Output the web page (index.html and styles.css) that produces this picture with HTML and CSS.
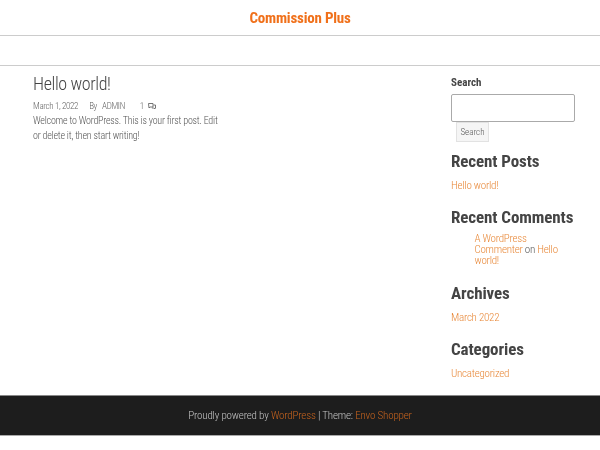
FILE: index.html
```html
<!DOCTYPE html>
<html lang="en">
<head>
<meta charset="utf-8">
<title>Commission Plus</title>
<link rel="stylesheet" href="styles.css">
</head>
<body>
<header class="site-header">
  <a class="site-title" href="#">Commission Plus</a>
</header>
<nav class="site-nav"></nav>
<div class="content">
  <main class="posts">
    <article class="post">
      <h2 class="post-title">Hello world!</h2>
      <div class="post-meta">
        <span class="meta-date">March 1, 2022</span>
        <span class="meta-by">By</span>
        <span class="meta-author">ADMIN</span>
        <span class="meta-comments">1
          <svg class="comment-icon" width="8" height="7" viewBox="0 0 8 7" aria-hidden="true">
            <path d="M.5.5h4.5v3.5h-3l-1 1z" fill="none" stroke="#666" stroke-width=".9"/>
            <path d="M5.5 2h2v3h-.6v1l-1-1h-2" fill="none" stroke="#666" stroke-width=".9"/>
          </svg>
        </span>
      </div>
      <p class="post-excerpt">Welcome to WordPress. This is your first post. Edit or delete it, then start writing!</p>
    </article>
  </main>
  <aside class="sidebar">
    <section class="widget-search">
      <label class="search-label">Search</label>
      <input class="search-input" type="text">
      <button class="search-button">Search</button>
    </section>
    <section class="widget">
      <h3 class="widget-title">Recent Posts</h3>
      <a class="link" href="#">Hello world!</a>
    </section>
    <section class="widget">
      <h3 class="widget-title">Recent Comments</h3>
      <div class="comment-item"><a class="link" href="#">A WordPress Commenter</a> on <a class="link" href="#">Hello world!</a></div>
    </section>
    <section class="widget">
      <h3 class="widget-title">Archives</h3>
      <a class="link" href="#">March 2022</a>
    </section>
    <section class="widget">
      <h3 class="widget-title">Categories</h3>
      <a class="link" href="#">Uncategorized</a>
    </section>
  </aside>
</div>
<footer class="site-footer">
  <span>Proudly powered by <a class="footer-link" href="#">WordPress</a> | Theme: <a class="footer-link" href="#">Envo Shopper</a></span>
</footer>
</body>
</html>
```
FILE: styles.css
```css
* { box-sizing: border-box; }
html, body { margin: 0; padding: 0; background: #fff; }
body {
  width: 600px;
  height: 450px;
  overflow: hidden;
  font-family: Roboto, "Liberation Sans", sans-serif;
  font-stretch: 75%;
  font-weight: 300;
  font-size: 12px;
  color: #666;
  filter: blur(0.4px);
}
a { text-decoration: none; }
.site-header {
  height: 36px;
  border-bottom: 1px solid #ccc;
  display: flex;
  justify-content: center;
  align-items: center;
}
.site-title {
  color: #f0701a;
  font-size: 15px;
  font-weight: 700;
  letter-spacing: -0.2px;
}
.site-nav { height: 30px; border-bottom: 1px solid #ccc; }
.content {
  height: 329px;
  display: flex;
  justify-content: space-between;
  padding: 0 25px 0 33px;
}
.posts { width: 190px; padding-top: 8px; }
.post-title {
  margin: 0;
  font-size: 18px;
  line-height: 20px;
  font-weight: 300;
  color: #444;
  letter-spacing: -0.4px;
}
.post-meta {
  display: flex;
  align-items: center;
  margin-top: 6px;
  height: 12px;
  font-size: 9px;
  letter-spacing: -0.35px;
  color: #666;
}
.meta-by { margin-left: 11px; }
.meta-author { margin-left: 5px; }
.meta-comments { margin-left: 15px; display: flex; align-items: center; gap: 4px; }
.post-excerpt {
  margin: 1px 0 0;
  font-size: 10px;
  line-height: 15px;
  letter-spacing: -0.22px;
  color: #555;
}
.sidebar { width: 124px; padding-top: 10px; }
.search-label {
  display: block;
  font-size: 11px;
  line-height: 13px;
  font-weight: 700;
  color: #444;
}
.search-input {
  display: block;
  width: 124px;
  height: 28px;
  margin: 5px 0 0;
  border: 1px solid #aaa;
  border-radius: 2px;
  background: #fff;
}
.search-button {
  display: block;
  margin: 0 0 0 5px;
  width: 33px;
  height: 20px;
  padding: 0;
  background: #f5f5f5;
  border: 1px solid #e2e2e2;
  font-family: inherit;
  font-stretch: inherit;
  font-weight: 300;
  font-size: 9px;
  color: #555;
}
.widget { margin-top: 12px; }
.widget-search + .widget { margin-top: 7px; }
.widget-title {
  margin: 0;
  font-size: 17px;
  line-height: 24px;
  font-weight: 700;
  color: #444;
  letter-spacing: -0.1px;
  white-space: nowrap;
}
.link { color: #e8893a; }
.widget > .link { display: block; margin-top: 6px; line-height: 14px; font-size: 11px; letter-spacing: -0.25px; }
.comment-item {
  margin: 4px 0 0 23.5px;
  padding-bottom: 3px;
  font-size: 11px;
  line-height: 11px;
  letter-spacing: -0.25px;
  color: #555;
}
.site-footer {
  height: 41px;
  background: #1d1d1d;
  border-top: 1px solid #888;
  border-bottom: 1px solid #aaa;
  display: flex;
  align-items: center;
  justify-content: center;
  padding-bottom: 1px;
  font-size: 11px;
  letter-spacing: -0.18px;
  color: #c4c4c4;
}
.footer-link { color: #c8641e; }
```
